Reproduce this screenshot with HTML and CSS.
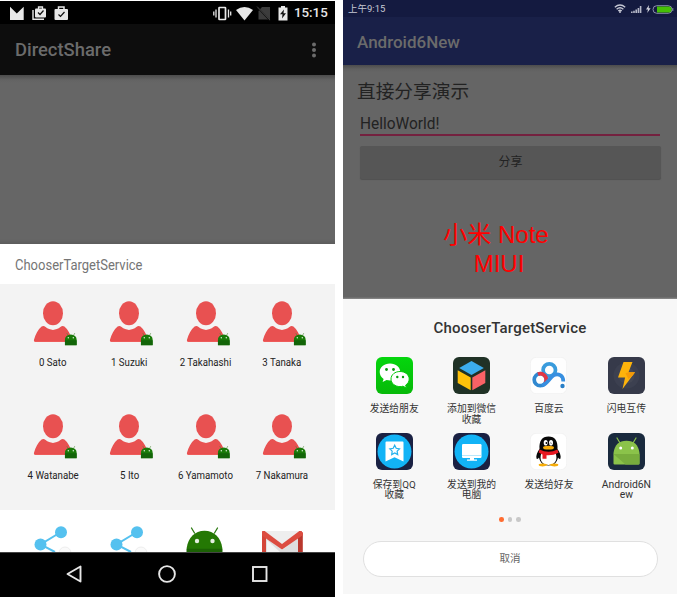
FILE: index.html
```html
<!DOCTYPE html>
<html lang="zh-CN">
<head>
<meta charset="utf-8">
<title>Direct Share</title>
<link rel="stylesheet" href="styles.css">
</head>
<body>
<svg class="defs" aria-hidden="true">
  <defs>
    <symbol id="droid" viewBox="0 0 12 13">
      <path d="M2 .4 3.400 3M10 .4 8.600 3" stroke="#4c8a36" stroke-width=".6"/>
      <path d="M0 12.600V7a6 5.200 0 0 1 12 0v5.600z" fill="#197a09"/>
      <path d="M0 7.500h12v5H0z" fill="#126408"/>
      <circle cx="3.500" cy="5" r=".75" fill="#d9ecd4"/><circle cx="8.500" cy="5" r=".75" fill="#d9ecd4"/>
    </symbol>
    <symbol id="person" viewBox="0 0 44 46">
      <ellipse cx="20" cy="12.300" rx="10" ry="12" fill="#e85151"/>
      <path d="M1 38.800C2.500 33.600 5 28.600 8.600 25.600c1.300-1 2.700-.7 4 .5 4.400 3.700 10.400 3.700 14.800 0 1.300-1.200 2.700-1.500 4-.5 3.600 3 6.100 8 7.600 13.200.4 1.300-.3 1.900-1.500 1.900h-35C1.300 40.700.6 40.100 1 38.800z" fill="#e85151"/>
      <path d="M1.500 40.300h37" stroke="#f14a48" stroke-width=".8"/>
      <use href="#droid" x="31.800" y="31.700" width="12" height="13"/>
    </symbol>
    <symbol id="share" viewBox="0 0 44 26">
      <circle cx="31" cy="27" r="6" fill="#fafafa" stroke="#eee"/>
      <path d="m27 6-20.500 12.500L21 26" fill="none" stroke="#55c1ef" stroke-width="2"/>
      <circle cx="27" cy="6.300" r="6" fill="#55c1ef"/><circle cx="6.500" cy="18.500" r="6" fill="#55c1ef"/>
    </symbol>
  </defs>
</svg>
<main class="board">
  <section class="phone nexus">
    <header class="status">
      <svg width="60" height="22" viewBox="0 0 60 22">
        <path d="M0 4.700 6.800 11.500 13.700 4.700V18H0z" fill="#e8e8e8"/>
        <path d="M23 8v9.300h11" fill="none" stroke="#e8e8e8" stroke-width="1.400"/>
        <rect x="25" y="6.500" width="11" height="9" rx="1" fill="#e8e8e8"/><path d="M28.500 7V5h4v2" fill="none" stroke="#e8e8e8" stroke-width="1.300"/><path d="m28 10.500 2 2 3.500-4" fill="none" stroke="#111" stroke-width="1.200"/>
        <rect x="44.500" y="7" width="13.500" height="11" rx="1" fill="#e8e8e8"/><path d="M48.500 7V5h5.500v2" fill="none" stroke="#e8e8e8" stroke-width="1.500"/><path d="m48.500 12.500 2 2 4-4.500" fill="none" stroke="#111" stroke-width="1.200"/>
      </svg>
      <svg class="status-right" width="78" height="22" viewBox="0 0 78 22">
        <rect x="6" y="5.500" width="6.500" height="12" rx=".5" fill="none" stroke="#e8e8e8" stroke-width="1.700"/>
        <path d="M3 7.500v8M15.500 7.500v8M.8 9.500v4M17.700 9.500v4" stroke="#e8e8e8" stroke-width="1.300"/>
        <path d="M23 8Q31.500 1.800 40 8L31.500 18.500z" fill="#e8e8e8"/>
        <path d="M49 5h8v12.500H45.500V9z" fill="#3c3c3c"/><path d="m44.500 5.500 12.500 13" stroke="#111" stroke-width="1.500"/><path d="m44 4.500 13 13.500" stroke="#555" stroke-width=".7"/>
        <path d="M65.500 5.500H68V4h4v1.500h2.500v13h-9z" fill="#e8e8e8"/><path d="m71 7.500-4 4.800h2.500L69 16.500l4-5.200h-2.500z" fill="#111"/>
      </svg>
      <span class="clock">15:15</span>
    </header>
    <div class="bar"><h1>DirectShare</h1>
      <svg width="6" height="18" viewBox="0 0 6 18" fill="#6b6b6b"><circle cx="3" cy="3.500" r="2"/><circle cx="3" cy="9" r="2"/><circle cx="3" cy="14.500" r="2"/></svg>
    </div>
    <div class="backdrop"></div>
    <h2 class="sheet-title">ChooserTargetService</h2>
    <div class="people">
      <div class="person"><svg><use href="#person"/></svg><span>0 Sato</span></div>
      <div class="person"><svg><use href="#person"/></svg><span>1 Suzuki</span></div>
      <div class="person"><svg><use href="#person"/></svg><span>2 Takahashi</span></div>
      <div class="person"><svg><use href="#person"/></svg><span>3 Tanaka</span></div>
      <div class="person"><svg><use href="#person"/></svg><span>4 Watanabe</span></div>
      <div class="person"><svg><use href="#person"/></svg><span>5 Ito</span></div>
      <div class="person"><svg><use href="#person"/></svg><span>6 Yamamoto</span></div>
      <div class="person"><svg><use href="#person"/></svg><span>7 Nakamura</span></div>
    </div>
    <div class="apps">
      <svg class="app-cut"><use href="#share"/></svg>
      <svg class="app-cut"><use href="#share"/></svg>
      <svg class="app-cut" viewBox="0 0 44 26">
        <path d="m5.500 2 3 5M31.500 2l-3 5" stroke="#2c7a12" stroke-width="1.300" stroke-linecap="round"/>
        <path d="M.7 26V22C2 12 9 4.800 18.500 4.800S35 12 36.300 22v4z" fill="#247804"/><path d="M.7 22.800h35.600V26H.7z" fill="#1b6104"/>
        <circle cx="11" cy="15" r="2.200" fill="#e4eee1"/><circle cx="26.500" cy="15" r="2.200" fill="#e4eee1"/>
      </svg>
      <svg class="app-cut" viewBox="0 0 44 26">
        <path d="M0 5h40v21H0z" fill="#eee"/><path d="m4 12 16 12 16-12v14H4z" fill="#dedede"/><path d="m5 14 13 12H5z" fill="#f4f4f4"/>
        <path d="M-.8 7Q0 4.700 2.800 5L4 12v14H-.8z" fill="#d44639"/><path d="M40.800 7Q40 4.700 37.200 5L36 12v14h4.800z" fill="#b9372d"/>
        <path d="M-.8 7Q0 4.300 3 5.300L20 18 37 5.300Q40 4.300 40.800 7v2.200L20 23.500-.8 9.200z" fill="#dc4c40"/>
      </svg>
    </div>
    <nav class="keys">
      <svg width="18" height="20" viewBox="0 0 18 20"><path d="M15.500 2.500v15L2.500 10z" fill="none" stroke="#e6e6e6" stroke-width="1.900" stroke-linejoin="round"/></svg>
      <svg width="20" height="20" viewBox="0 0 20 20"><circle cx="10" cy="10" r="7.900" fill="none" stroke="#e6e6e6" stroke-width="1.900"/></svg>
      <svg width="18" height="20" viewBox="0 0 18 20"><rect x="2" y="3" width="13.500" height="14" fill="none" stroke="#e6e6e6" stroke-width="1.900"/></svg>
    </nav>
  </section>

  <section class="phone miui">
    <header class="m-status"><span>上午9:15</span>
      <svg width="60" height="16" viewBox="0 0 60 16">
        <g fill="none" stroke="#c7c9d5" stroke-width="1.300"><path d="M.8 6.300Q6 1.700 11.200 6.300M2.600 8.200Q6 5.300 9.400 8.200M4.300 10Q6 8.500 7.700 10"/></g><circle cx="6" cy="11" r="1" fill="#c7c9d5"/>
        <path d="M17 10.500h1.600V12H17zM19.200 9.700h1.600V12h-1.600zM21.400 8.400H23V12h-1.600zM23.600 6.900h1.600V12h-1.600zM25.800 5h1.600v7h-1.600z" fill="#b4b7c7"/>
        <path d="M35 4 32 8.500h2l-.8 3.500 3.400-4.700h-2z" fill="#d5d6df"/>
        <rect x="39" y="4.700" width="19" height="7.600" rx="3.800" fill="none" stroke="#8b8fab"/><path d="M43 5.400h11.500a3.100 3.100 0 0 1 0 6.200H43z" fill="#46c006"/><path d="M58.800 7v3" stroke="#8b8fab"/>
      </svg>
    </header>
    <div class="m-bar"><h1>Android6New</h1></div>
    <div class="m-body">
      <p class="demo">直接分享演示</p>
      <div class="field"><span>HelloWorld!</span></div>
      <div class="share-btn">分享</div>
      <div class="note"><span>小米 Note</span><span>MIUI</span></div>
    </div>
    <div class="m-sheet">
      <h2>ChooserTargetService</h2>
      <div class="targets">
        <div class="target"><svg viewBox="0 0 37 37"><defs><linearGradient id="wg" x2="0" y2="1"><stop stop-color="#04d60d"/><stop offset="1" stop-color="#07b909"/></linearGradient></defs><rect width="37" height="37" rx="6" fill="url(#wg)"/><path d="M14 6.500c-6 0-10.300 3.800-10.300 8.600 0 3 1.500 5.200 3.900 6.800l-1 3.200 4-2.100c1 .3 2.200.5 3.400.5 6 0 10.300-3.800 10.300-8.400S20 6.500 14 6.500z" fill="#fff"/><path d="M24 14.500c-5 0-9 3.200-9 7.500s4 7.600 9 7.600c1 0 2-.1 3-.4l3.500 1.900-.9-2.900c2.200-1.500 3.600-3.600 3.600-6.200 0-4.300-4.200-7.500-9.200-7.500z" fill="#fff" stroke="#06c90b"/><g fill="#079b0b"><circle cx="10.500" cy="12.500" r="1.400"/><circle cx="17.500" cy="12.500" r="1.400"/><circle cx="21.300" cy="20" r="1.200"/><circle cx="27" cy="20" r="1.200"/></g></svg><span>发送给朋友</span></div>
        <div class="target"><svg viewBox="0 0 37 37"><rect width="37" height="37" rx="6" fill="#203226"/><path d="m18.500 4 12.300 7-12.300 7-12.300-7z" fill="#3caded"/><path d="M4.700 13.200 17.700 20.500V33.300L4.700 26z" fill="#ffc20a"/><path d="m32.300 13.200-13 7.300v12.800l13-7.300z" fill="#fa6266"/></svg><span>添加到微信<br>收藏</span></div>
        <div class="target"><svg viewBox="0 0 37 37"><rect x=".3" y=".3" width="36.400" height="36.400" rx="6" fill="#fefefe" stroke="#ececec" stroke-width=".6"/><g fill="none" stroke-width="3.700"><circle cx="19.300" cy="13" r="6.200" stroke="#399bdc"/><circle cx="10.200" cy="22.700" r="6" stroke="#3088d0"/><path d="M8 17.200a6 6 0 0 1 8.300 5.500q0 2.300-1.300 3.800" stroke="#e23745"/><path d="M12 28.500c6-2 8-8.500 12-10.500 4-1.700 9.500 0 9.300 6.500" stroke="#378fe0"/></g><circle cx="32.500" cy="29" r="2.200" fill="#287fc7"/></svg><span>百度云</span></div>
        <div class="target"><svg viewBox="0 0 37 37"><rect width="37" height="37" rx="6" fill="#363a4a"/><circle cx="18.500" cy="18.500" r="13" fill="#3c4050"/><circle cx="18.500" cy="18.500" r="8" fill="#454855"/><path d="M15.500 5h9l-4 10.200H27L14.500 32l2.600-11.500H10z" fill="#fdb30b"/><path d="m20.500 15.200-3 1L20.500 22l4.400-3.800L27 15.200z" fill="#f59a08"/></svg><span>闪电互传</span></div>
        <div class="target"><svg viewBox="0 0 37 37"><rect width="37" height="37" rx="6" fill="#1a2143"/><circle cx="18.500" cy="18.500" r="17" fill="#12b3f6"/><path d="M9.500 9.500q0-1 1-1h16q1 0 1 1V28.500l-9-4.300-9 4.300z" fill="#fff"/><path d="m18.700 12.200 1.500 3.100 3.300.5-2.400 2.400.6 3.400-3-1.600-3 1.600.5-3.400-2.400-2.400 3.400-.5z" fill="none" stroke="#24b1ed" stroke-width="1.200"/></svg><span>保存到QQ<br>收藏</span></div>
        <div class="target"><svg viewBox="0 0 37 37"><rect width="37" height="37" rx="6" fill="#1a2143"/><circle cx="18.500" cy="18.500" r="17" fill="#12b3f6"/><rect x="9" y="11" width="19.500" height="14" rx="1.200" fill="#fff"/><path d="M9 22.500h19.500" stroke="#9bdcf8" stroke-width=".7"/><path d="M17 25h4v1.500h3v1.200H14v-1.200h3z" fill="#fff"/></svg><span>发送到我的<br>电脑</span></div>
        <div class="target"><svg viewBox="0 0 37 37"><rect x=".3" y=".3" width="36.400" height="36.400" rx="6" fill="#fff" stroke="#ececec" stroke-width=".6"/><path d="M9.500 16C9 8 12 3.500 18.500 3.500S28 8 27.500 16c2 3 3.800 6.500 3 9.500-.7 1-2-.2-2.500-1-1 5-4 8-9.500 8s-8.500-3-9.500-8c-.5.8-1.800 2-2.500 1-.8-3 1-6.500 3-9.500z" fill="#080808"/><path d="M11.500 20q7 3 14 0c2.500 6 0 12-7 12s-9.500-6-7-12z" fill="#fff"/><path d="M9 31q4-1.500 9 .8-4 2.500-8.500 1.200-1.500-1-.5-2zM28 31q-4-1.500-9 .8 4 2.500 8.500 1.200 1.500-1 .5-2z" fill="#f7ad08"/><ellipse cx="15.700" cy="9.700" rx="2" ry="2.800" fill="#fff"/><ellipse cx="21" cy="9.700" rx="2" ry="2.800" fill="#fff"/><circle cx="16.400" cy="10" r=".9"/><path d="M20 10.500q.7-1.500 1.500 0" fill="none" stroke="#111" stroke-width=".7"/><ellipse cx="18.500" cy="14.700" rx="5.500" ry="1.900" fill="#f7ad08"/><path d="M9.500 16.500q9 4.500 18 0l1 3.200q-5.500 3-12 2.500v3.500h-4v-4.300q-2-.6-3.800-1.800z" fill="#e81822"/></svg><span>发送给好友</span></div>
        <div class="target"><svg viewBox="0 0 37 37"><rect width="37" height="37" rx="6" fill="#1a2a3e"/><path d="m9 5 3 5M28 5l-3 5" stroke="#8cc34a" stroke-width="1.200" stroke-linecap="round"/><path d="M5.500 20C6.500 12 11 7.800 18.500 7.800S30.500 12 31.500 20v10.500q0 1-1 1h-24q-1 0-1-1z" fill="#8bc34a"/><path d="M5.500 21h26v9.500q0 1-1 1h-13z" fill="#78ad3d"/><circle cx="12.700" cy="15" r="1.500" fill="#fff"/><circle cx="24.300" cy="15" r="1.500" fill="#fff"/></svg><span class="latin">Android6N<br>ew</span></div>
      </div>
      <div class="dots"><i class="on"></i><i></i><i></i></div>
      <div class="cancel">取消</div>
    </div>
  </section>
</main>
</body>
</html>
```
FILE: styles.css
```css
* { box-sizing: border-box; }
body { margin: 0; width: 678px; height: 598px; overflow: hidden; background: #fff; font-family: Roboto, "Noto Sans CJK SC", sans-serif; }
h1, h2, p { margin: 0; }
svg { display: block; flex: none; }
.defs { display: none; }
.board { display: flex; gap: 8px; }
.phone { display: flex; flex-direction: column; overflow: hidden; }

.nexus { width: 335px; height: 596px; margin-top: 1px; background: #fff; }
.status { height: 23px; background: #000; display: flex; align-items: center; padding: 0 7px 0 10px; color: #e8e8e8; }
.status-right { margin-left: auto; }
.clock { width: 34px; margin-left: 3px; font-size: 13.300px; font-weight: 500; white-space: nowrap; }
.bar { height: 51px; background: #0d0d0d; display: flex; align-items: center; justify-content: space-between; padding: 0 18px 0 15px; color: #6b6b6b; }
.bar h1 { font-size: 18.400px; font-weight: 500; }
.backdrop { height: 169px; background: linear-gradient(#4c4c4c, #636363 5px, #666 8px, #666 164px, #5c5c5c); }
.sheet-title { height: 40px; padding: 1px 15px 0; line-height: 40px; font-size: 14px; font-weight: 400; color: #757575; transform: scaleX(.928); transform-origin: 15px 50%; }
.people { height: 226px; background: #f3f3f3; padding: 0 15px; display: grid; grid-template-columns: repeat(4, 76.300px); grid-auto-rows: 113px; }
.person { display: flex; flex-direction: column; align-items: center; padding-top: 17px; }
.person svg { width: 44px; height: 46px; margin-left: 4px; }
.person span { margin-top: 8px; font-size: 11.800px; line-height: 14px; color: #222; white-space: nowrap; transform: scaleX(.82); }
.apps { height: 42px; padding: 16px 15px 0; display: grid; grid-template-columns: repeat(4, 76.300px); overflow: hidden; }
.app-cut { width: 44px; height: 26px; margin-left: 18.500px; }
.keys { height: 45px; padding: 0 1px 2px 0; background: #000; border-top: 1px solid #444; display: flex; justify-content: center; align-items: center; gap: 74px; }

.miui { width: 334px; height: 594px; }
.m-status { height: 17px; background: #141a40; color: #c7c9d5; display: flex; align-items: center; justify-content: space-between; padding: 0 3px 0 5px; font-size: 9.500px; line-height: 17px; }
.m-bar { height: 48px; background: #192048; display: flex; align-items: center; padding: 2px 0 0 14px; color: #6b6b6b; }
.m-bar h1 { font-size: 17px; font-weight: 500; }
.m-body { height: 234px; padding: 14px 16px 0; background: linear-gradient(#4c4c4c, #606060 4px, #656565 7px, #656565 232px, #8c8c8c 234px); color: #222; }
.demo { margin-left: -2px; font-size: 18.700px; line-height: 27px; }
.field { height: 30px; margin: 0 1px; border-bottom: 2px solid #74213f; font-size: 16px; line-height: 35px; }
.field span { display: inline-block; transform: scaleX(.965); transform-origin: left; }
.share-btn { height: 33px; margin: 10px 0 0 1px; border-radius: 2px; background: #565656; box-shadow: 0 1px 1px #505050; text-align: center; font-size: 12px; line-height: 33px; }
.note { margin: 41px 0 0; width: 268px; display: flex; flex-direction: column; align-items: center; padding-left: 6px; color: #f00; font: 24px/29px "Liberation Sans", "Noto Sans CJK SC", sans-serif; }
.note span:last-child { margin-left: 6px; }
.m-sheet { height: 295px; background: #f7f7f7; display: flex; flex-direction: column; align-items: center; }
.m-sheet h2 { height: 58px; line-height: 58px; font-size: 15px; font-weight: 500; color: #333; letter-spacing: .2px; }
.targets { width: 310px; height: 151px; margin-left: 1px; display: grid; grid-template-columns: repeat(4, 77.400px); grid-auto-rows: 75.500px; }
.target { display: flex; flex-direction: column; align-items: center; text-align: center; font-size: 9.800px; line-height: 10.500px; color: #333; }
.target svg { width: 37px; height: 37px; }
.target span { margin-top: 10px; white-space: nowrap; }
.target .latin { font-size: 10.400px; }
.dots { display: flex; gap: 4px; margin-top: 9px; height: 5px; }
.dots i { width: 4.700px; height: 4.700px; border-radius: 50%; background: #c8c8c8; }
.dots .on { background: #ff6c31; }
.cancel { width: 295px; height: 36px; margin-top: 18.500px; border: 1px solid #e0e0e0; border-radius: 18px; background: #fff; text-align: center; font-size: 10.500px; line-height: 34px; color: #666; }
```
